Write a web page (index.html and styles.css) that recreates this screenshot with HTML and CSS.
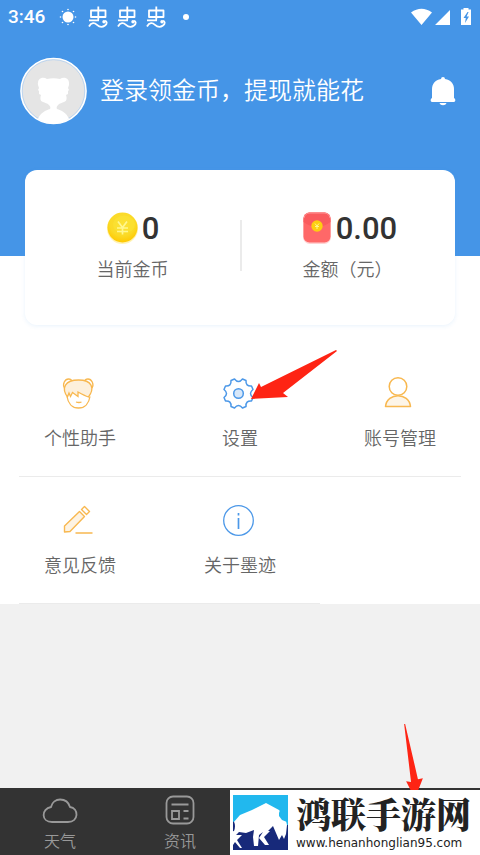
FILE: index.html
```html
<!DOCTYPE html>
<html lang="zh-CN">
<head>
<meta charset="utf-8">
<meta name="viewport" content="width=device-width, initial-scale=1">
<title>我的</title>
<link rel="stylesheet" href="styles.css">
</head>
<body>
<svg class="defs" width="0" height="0" aria-hidden="true">
  <defs>
    <radialGradient id="gold" cx="50%" cy="35%" r="65%"><stop offset="0" stop-color="#fbdc35"/><stop offset=".65" stop-color="#fbda26"/><stop offset="1" stop-color="#ffc800"/></radialGradient>
    <symbol id="bug" viewBox="0 0 20 22"><path d="M3 4.500h14.500v6.500H3zM10.300 .5v13M1 14.300h10M1 20.500C3.500 16 6.500 16.500 9 18.800S14.500 21.300 17 19.500 19 14.800 17 14.800" fill="none" stroke="#fff" stroke-width="1.800" stroke-linejoin="round"/><circle cx="16" cy="15.800" r="1.700" fill="#fff"/></symbol>
  </defs>
</svg>
<header class="header">
  <div class="status">
    <span class="time">3:46</span>
    <svg class="sun" width="18" height="18" viewBox="0 0 18 18"><circle cx="9" cy="9" r="5.500" fill="#fff"/><g fill="#fff"><circle cx="9" cy="1.500" r=".8"/><circle cx="9" cy="16.500" r=".8"/><circle cx="1.500" cy="9" r=".8"/><circle cx="16.500" cy="9" r=".8"/><circle cx="3.500" cy="3.500" r=".8"/><circle cx="14.500" cy="3.500" r=".8"/><circle cx="3.500" cy="14.500" r=".8"/><circle cx="14.500" cy="14.500" r=".8"/></g></svg>
    <div class="bugs">
      <svg width="20" height="22"><use href="#bug"/></svg>
      <svg width="20" height="22"><use href="#bug"/></svg>
      <svg width="20" height="22"><use href="#bug"/></svg>
    </div>
    <i class="dot"></i>
    <svg class="signals" width="62" height="20" viewBox="0 0 62 20" fill="#fff"><path d="M1 5.500Q11.500-2 22 5.500L11.500 18zM25 18 40 3v15zM53.500 1h5v1.500H61V18H51V2.500h2.500z"/><path d="M57.500 5 53.500 11h2.300l-.8 5 4-6.500h-2.400l2-4.500z" fill="#4595e7"/></svg>
  </div>
  <div class="profile">
    <svg class="avatar" width="68" height="68" viewBox="0 0 68 68"><circle cx="33.500" cy="34" r="32.500" fill="#e5e5e5" stroke="#fff" stroke-width="1.700"/><circle cx="33.500" cy="34" r="31.300" fill="none" stroke="#aacdf2" stroke-width=".7"/><path d="M18 62c2-6 8-9 12-10 1-1 0-3-1-4-2-2-4-2-6-3-3-1-3-4-2-7l-2-1v-3l-1-1 1-2-1-3c-1-7 5-9 9-6 4-1 9-1 13 0 4-3 10-1 9 6l-1 3 1 2-1 1v3l-2 1c1 3 1 6-2 7-2 1-4 1-6 3-1 1-2 3-1 4 4 1 10 4 12 10-10 6-21 6-31 0z" fill="#fff"/></svg>
    <a class="login" href="#login">登录领金币，提现就能花</a>
    <button class="bell" type="button" aria-label="消息"><svg width="26" height="30" viewBox="0 0 26 30" fill="#fff"><path d="M11 3a2 2 0 0 1 4 0c6 1 9 5 9 10v9c2 1 1.500 4 0 4H2c-1.500 0-2-3 0-4v-9C2 8 5 4 11 3zM9.500 27h7c-1 3-6 3-7 0z"/></svg></button>
  </div>
</header>
<main class="main">
  <section class="card">
    <div class="stat">
      <div class="value"><svg class="coin" width="32" height="36" viewBox="0 0 32 36"><circle cx="16.500" cy="17.500" r="15.500" fill="#fff3b5"/><circle cx="16.500" cy="16.500" r="15" fill="url(#gold)"/><ellipse cx="18" cy="13.500" rx="11" ry="9" fill="#fce536" opacity=".5"/><path d="m12 10.500 4.500 6 4.500-6M16.500 16.500v7M11 17h11M11 20.500h11" fill="none" stroke="#fff78f" stroke-width="1.700"/></svg><strong>0</strong></div>
      <span class="caption">当前金币</span>
    </div>
    <div class="stat">
      <div class="value"><svg class="packet" width="30" height="36" viewBox="0 0 30 36"><rect x="1" y="4" width="28" height="29" rx="7" fill="#ffd2d2"/><rect x="1.500" y="1.500" width="27" height="30" rx="6" fill="#ff6868"/><path d="M1.500 11V7.500a6 6 0 0 1 6-6h15a6 6 0 0 1 6 6V11Q15 21 1.500 11z" fill="#fa5b5e"/><path d="M2 7q1-5 6-5h14q5 0 6 5" fill="none" stroke="#ff9595"/><circle cx="15" cy="15" r="5.700" fill="#fdce10"/><path d="m13 12.500 2 2.500 2-2.500M15 15v3m-2-2.500h4" fill="none" stroke="#fff58c"/></svg><strong>0.00</strong></div>
      <span class="caption">金额（元）</span>
    </div>
  </section>
  <nav class="menu" aria-label="功能">
    <div class="row">
      <a href="#assistant"><svg width="36" height="36" viewBox="0 0 36 36" fill="none" stroke="#f8b850" stroke-width="1.300"><path d="M7.500 22C1 13 5 5 18.500 5S35 13 28.500 22c-3-1-6-2.500-10.500-5v4.500l-5.500-4-2 4L9 18z" fill="#fdf0dc"/><path d="M7 21.500C8 28 12 33 18.500 33S29 28 30 21.500M4.500 13C2 9 5 4 8.500 4q3 0 3 2M32 13c2.500-4-.5-9-4-9q-3 0-3 2M16 27q3 1 5.500 0"/></svg><span>个性助手</span></a>
      <a href="#settings"><svg width="36" height="36" viewBox="0 0 36 36" fill="none" stroke="#4c98e8" stroke-width="1.500" stroke-linejoin="round"><path d="M14.500 4Q18.500 9 22.500 4L26 5.500Q25.500 11.500 31.500 11L33 14.500Q28 18.500 33 22.500L31.500 26Q25.500 25.500 26 31.500L22.500 33Q18.500 28 14.500 33L11 31.500Q11.500 25.500 5.500 26L4 22.500Q9 18.500 4 14.500L5.500 11Q11.500 11.500 11 5.500Z"/><circle cx="18.500" cy="18.500" r="4.800" fill="#d7e7f9"/></svg><span>设置</span></a>
      <a href="#account"><svg width="36" height="36" viewBox="0 0 36 36" fill="none" stroke="#f8b850" stroke-width="1.500"><circle cx="18" cy="11.500" r="8.800"/><path d="M5.500 31.500C7 17 29 17 30.500 31.500z" fill="#fdf5e8" stroke-linejoin="round"/></svg><span>账号管理</span></a>
    </div>
    <div class="row">
      <a href="#feedback"><svg width="36" height="36" viewBox="0 0 36 36" fill="none" stroke="#f8b850" stroke-width="1.400" stroke-linejoin="round"><path d="m19.500 9.500 5 5L10 29.500l-5.500.5v-6z" fill="#fdf3e3"/><path d="m21.500 7.500 3-3 5 5-3 3zM15.500 31h17"/></svg><span>意见反馈</span></a>
      <a href="#about"><svg width="36" height="36" viewBox="0 0 36 36" fill="none" stroke="#4c98e8" stroke-width="1.300"><circle cx="18.500" cy="18.500" r="14.800"/><path d="M18.500 16v11M18.500 11v2.500" stroke-width="1.700"/></svg><span>关于墨迹</span></a>
    </div>
  </nav>
</main>
<footer class="tabbar">
  <a href="#weather"><svg width="36" height="32" viewBox="0 0 36 32" fill="none" stroke="#999" stroke-width="1.800"><path d="M10 27C-1 27-1 14 9 12c2-10 16-10 19 0 9 1 9 15-2 15z"/></svg><span>天气</span></a>
  <a href="#news"><svg width="36" height="32" viewBox="0 0 36 32" fill="none" stroke="#999" stroke-width="1.800"><rect x="4.500" y="1.500" width="27" height="27" rx="6.500"/><path d="M9.500 9.500h17M10 16h7v8h-7zM21.500 16h5M21.500 23.500h5"/></svg><span>资讯</span></a>
  <aside class="mark">
    <svg width="55" height="55" viewBox="0 0 55 55"><path fill="#21b8ee" d="M0 0h55v30H0z"/><path fill="#17297a" d="M0 30h55v25H0z"/><path fill="#fff" d="M0 28 7 20 19 15 33 8l13 7 6 7 2 8-1 9-2 5-2-4-3 5-3-7-3-7-5 5h2l-6 6 5 8h-4l-6-7 4-6-4 3-1 11h-4l-1-9 1-7-8 3-7-1-3 3h6l-5 5 5 8H7l-5-6-2 3z"/><path d="M0 27q2 4 0 9" fill="none" stroke="#17297a" stroke-width="2"/><path fill="#21b8ee" d="m46 18 2-6 2 5 3 3v4l1 3-5-2-3-4z"/></svg>
    <div class="brand"><b>鸿联手游网</b><span>www.henanhonglian95.com</span></div>
  </aside>
</footer>
<svg class="arrow arrow-settings" width="90" height="54" viewBox="0 0 90 54" aria-hidden="true"><path fill="#fe2414" d="M89 2 35 44l5 4L3 50 11 34l2 4L88 1z"/></svg>
<svg class="arrow arrow-tab" width="24" height="68" viewBox="0 0 24 68" aria-hidden="true"><path fill="#fe2414" d="m3 1 13 56 5-1-5 13H9L4 59l5 1L2 1z"/></svg>
</body>
</html>
```
FILE: styles.css
```css
* { box-sizing: border-box; }
body {
  position: relative;
  display: flex;
  flex-direction: column;
  min-height: 100vh;
  margin: 0;
  background: #f1f1f1;
  color: #666;
  font-family: Roboto, "Noto Sans CJK SC", sans-serif;
  font-weight: 350;
}
a { color: inherit; text-decoration: none; }
svg { display: block; flex: none; }
.defs { position: absolute; }

.header { padding-bottom: 131px; background: #4595e7; color: #fff; }
.status { display: flex; align-items: center; height: 33px; padding: 0 8px; }
.time { font-size: 19px; font-weight: 500; line-height: 32px; }
.sun { margin-left: 14px; }
.bugs { display: flex; gap: 9px; margin-left: 11px; }
.dot { width: 6px; height: 6px; margin-left: 17px; border-radius: 50%; background: #fff; }
.signals { margin-left: auto; }
.profile { display: flex; align-items: center; padding: 24px 24px 0 20px; }
.login { margin-left: 12px; font-size: 24px; line-height: 36px; }
.bell { margin-left: auto; padding: 0; border: 0; background: none; }

.main { background: #fff; }
.card {
  display: flex;
  margin: -86px 25px 0;
  padding: 40px 0;
  border-radius: 12px;
  background: #fff;
  box-shadow: 0 1px 4px rgba(69, 149, 231, .12);
}
.stat { flex: 1; display: flex; flex-direction: column; align-items: center; height: 75px; }
.stat + .stat { background: linear-gradient(#ebebeb, #ebebeb) 0 10px / 2px 51px no-repeat; }
.value { display: flex; align-items: center; gap: 4px; height: 37px; }
.value strong { color: #333; font-size: 31px; font-weight: 500; line-height: 36px; }
.packet { margin-left: 4px; }
.caption { font-size: 18px; line-height: 28px; margin-top: 9px; }

.menu { padding-top: 25px; }
.row { display: grid; grid-template-columns: repeat(3, 1fr); height: 127px; position: relative; }
.row a { display: flex; flex-direction: column; align-items: center; padding-top: 25px; font-size: 18px; line-height: 28px; }
.row svg { margin-right: 4px; }
.row span { margin-top: 14px; }
.row::after { content: ""; position: absolute; right: 19px; bottom: 0; left: 19px; height: 1px; background: #ebebeb; }
.row:last-child::after { right: 33.333%; }

.tabbar { position: relative; display: flex; height: 67px; margin-top: auto; background: #333; color: #999; }
.tabbar > a { display: flex; flex-direction: column; align-items: center; width: 25%; padding-top: 7px; font-size: 16px; line-height: 24px; }
.tabbar > a span { margin-top: 3px; }
.mark { position: absolute; right: 0; bottom: 0; display: flex; width: 250px; height: 65px; padding: 5px 3px; background: #fff; color: #222; }
.brand { margin-left: 8px; white-space: nowrap; }
.brand b { display: block; font: 900 35px/36px "Noto Serif CJK SC", "Noto Sans CJK SC", serif; }
.brand span { display: block; margin-top: 3px; font: 12px/18px "DejaVu Sans", sans-serif; }

.arrow { position: absolute; }
.arrow-settings { top: 349px; left: 248px; }
.arrow-tab { top: 723px; left: 402px; height: 67px; }
```
